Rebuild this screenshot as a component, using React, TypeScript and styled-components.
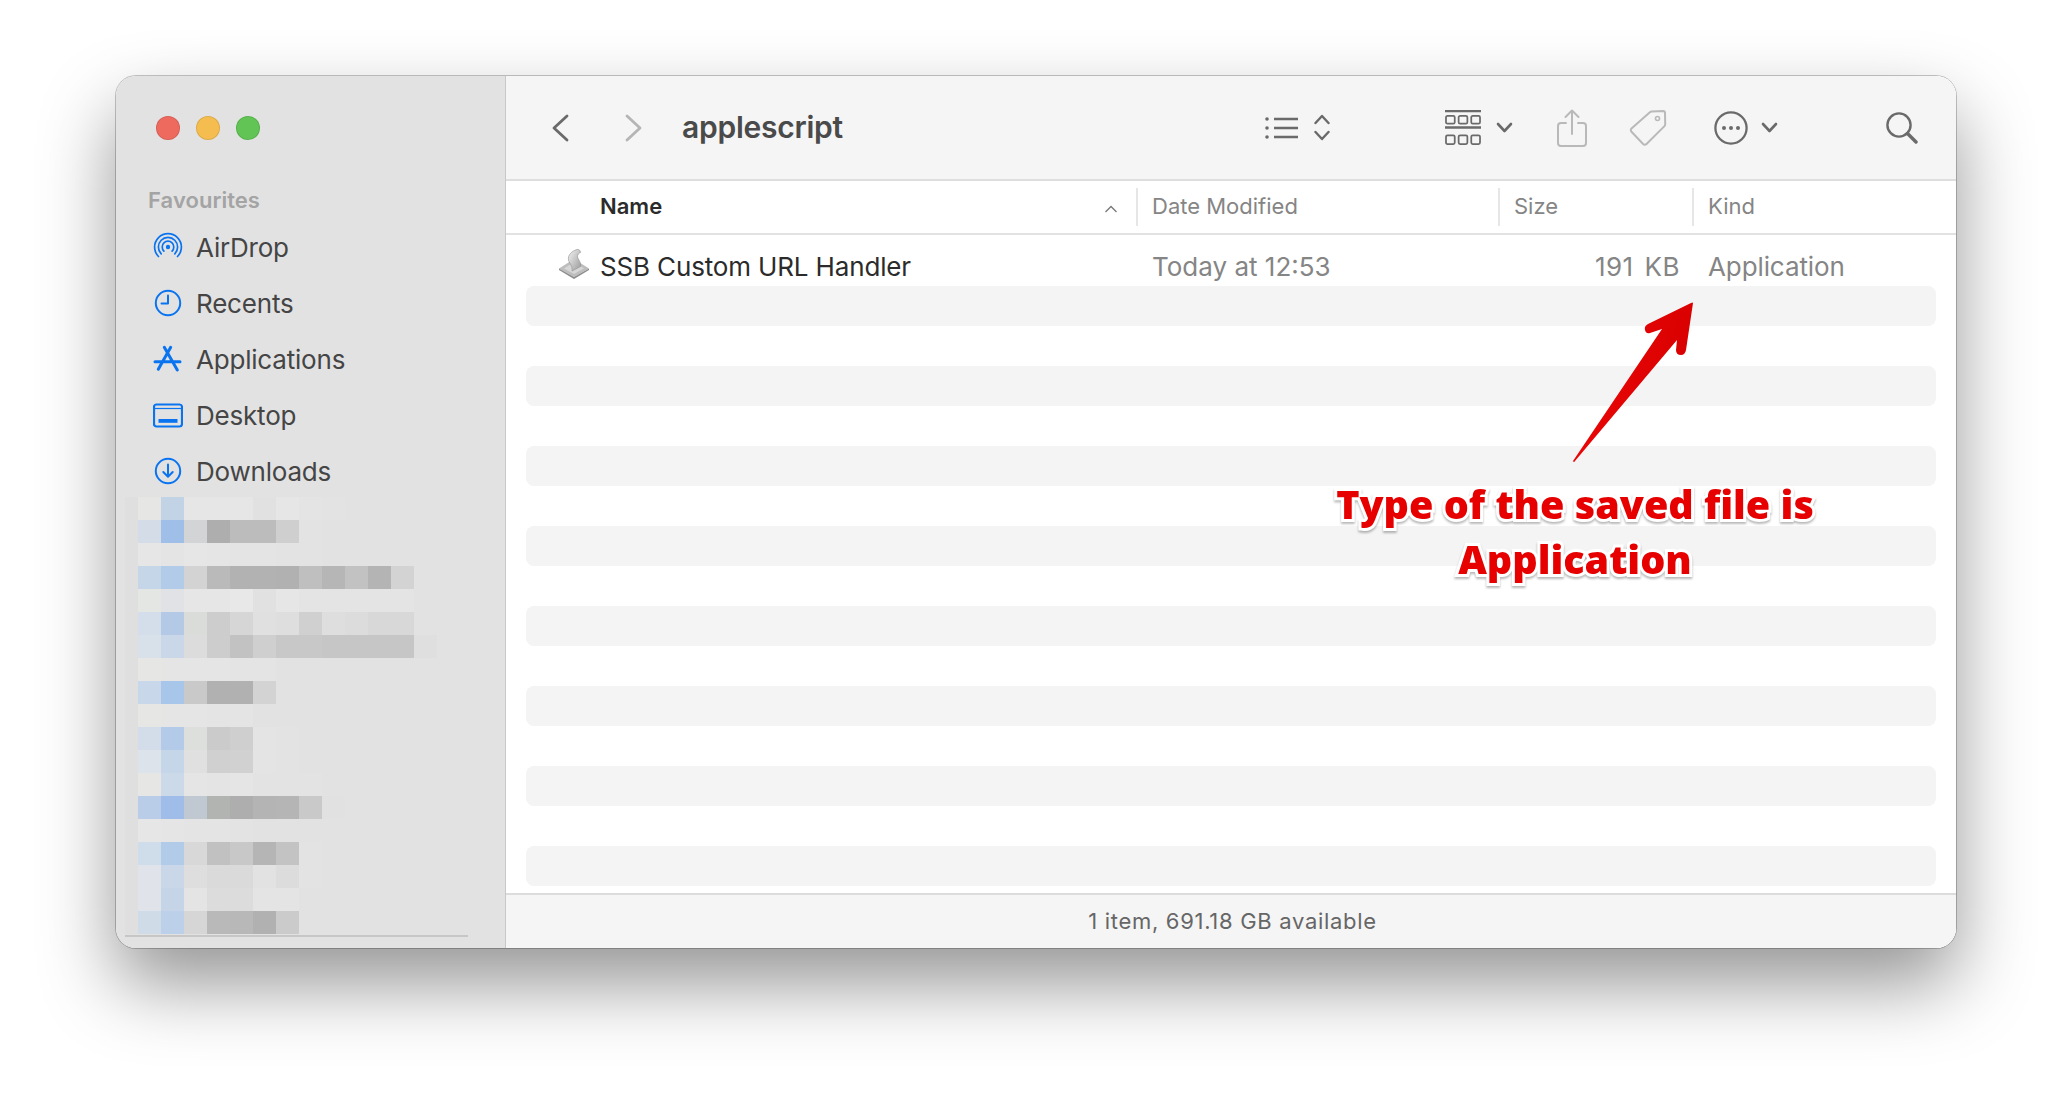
import React from 'react';
import styled, { createGlobalStyle } from 'styled-components';

const GlobalStyle = createGlobalStyle`
  body {
    margin: 0;
    background: #fff;
    font-family: Inter, "Liberation Sans", sans-serif;
  }
`;

const mosaic: string[][] = [
  ['e6e6e4', 'c3d3e6', 'e6e6e6', 'e6e6e6', 'e6e6e6', 'e1e1e1', 'e6e6e6', 'e4e4e4', 'e3e3e3'],
  ['d4dce8', '9fbfe8', 'd3d4d6', 'aeaeae', 'bcbcbc', 'bcbcbc', 'cfcfcf', 'e3e3e3'],
  ['e5e6e5', 'e4e4e4', 'e6e6e6', 'e5e5e5', 'e4e4e4', 'e4e4e4', 'e3e3e3', 'e3e3e3'],
  ['c5d6e8', 'b1cbe8', 'd3d3d3', 'bababa', 'b2b2b2', 'b2b2b2', 'b1b1b1', 'bfbfbf', 'b6b6b6', 'c2c2c2', 'b4b4b4', 'd3d3d3'],
  ['e4e6e4', 'e0e2e6', 'e6e6e6', 'e6e6e6', 'e8e8e8', 'e1e1e1', 'e6e6e6', 'e4e4e4', 'e4e4e4', 'e4e4e4', 'e4e4e4', 'e4e4e4'],
  ['d4deea', 'b4c9e6', 'dadcda', 'cdcdcd', 'd6d6d6', 'e0e0e0', 'dedede', 'd0d0d0', 'dedede', 'dcdcdc', 'd8d8d8', 'd8d8d8', 'e2e2e2'],
  ['d8e0ea', 'c9d7e8', 'dcdcdc', 'cdcdcd', 'c2c2c2', 'cfcfcf', 'c8c8c8', 'c8c8c8', 'c6c6c6', 'c6c6c6', 'c6c6c6', 'c6c6c6', 'dfdfdf'],
  ['e6e7e5', 'e5e5e5', 'e5e5e5', 'e5e5e5', 'e4e4e4', 'e4e4e4'],
  ['c8d8ea', 'a8c6ea', 'c9c9c9', 'b1b1b1', 'b1b1b1', 'd3d3d3'],
  ['e6e7e5', 'e5e5e5', 'e5e5e5', 'e4e4e4', 'e4e4e4'],
  ['d3dce9', 'b3cae8', 'dcdfdc', 'cbcbcb', 'cfcfcf', 'e4e4e4', 'e3e3e3'],
  ['dde3eb', 'c5d6e8', 'e0e0e0', 'd0d0d0', 'd1d1d1', 'e4e4e4', 'e3e3e3'],
  ['e6e6e4', 'ccd9e8', 'e5e5e5', 'e4e4e4', 'e5e5e5', 'e3e3e3', 'e3e3e3', 'e3e3e3'],
  ['b9cde8', '9fbde8', 'c0c8d2', 'b2b4b2', 'aeaeae', 'b4b4b4', 'b5b5b5', 'c9c9c9', 'e1e1e1'],
  ['e5e6e5', 'e5e5e5', 'e4e4e4', 'e4e4e4', 'e3e3e3'],
  ['cfdcea', 'b1cbe9', 'd8d8d8', 'c1c1c1', 'c8c8c8', 'b5b5b5', 'c3c3c3', 'e3e3e3'],
  ['e0e4ea', 'c9d7e8', 'dedede', 'dadada', 'dadada', 'e2e2e2', 'dcdcdc', 'e3e3e3'],
  ['e0e4ea', 'c5d4e7', 'e4e4e4', 'dcdcdc', 'dcdcdc', 'e4e4e4', 'e4e4e4'],
  ['d0dbe8', 'bdd0e9', 'd6d6d6', 'b9b9b9', 'b8b8b8', 'b1b1b1', 'cbcbcb'],
];

const App: React.FC = () => (
  <>
    <GlobalStyle />
    <Page>
      <Window>
        <Sidebar>
          <Lights>
            <Light $color="#ee6a5f" />
            <Light $color="#f5bd4f" />
            <Light $color="#61c454" />
          </Lights>
          <SectionTitle>Favourites</SectionTitle>
          <SideRow>
            <SideIcon viewBox="0 0 30 30">
              <circle cx="15" cy="15" r="2.2" fill="#0a74f0" />
              <path
                d="M5.5 24.5A13.4 13.4 0 1 1 24.5 24.5M8.2 21.8A9.6 9.6 0 1 1 21.8 21.8M10.9 19.1A5.8 5.8 0 1 1 19.1 19.1"
                fill="none"
                stroke="#0a74f0"
                strokeWidth="1.7"
                strokeLinecap="round"
              />
            </SideIcon>
            AirDrop
          </SideRow>
          <SideRow>
            <SideIcon viewBox="0 0 30 30">
              <circle cx="15" cy="15" r="12.2" fill="none" stroke="#0a74f0" strokeWidth="2" />
              <path d="M15 7.5V15.6H8.5" fill="none" stroke="#0a74f0" strokeWidth="2" strokeLinecap="round" strokeLinejoin="round" />
            </SideIcon>
            Recents
          </SideRow>
          <SideRow>
            <SideIcon viewBox="0 0 30 30">
              <path d="M17.7 3.3L5.3 25.3M11.3 3.3L24.3 26M2 17.7H27" fill="none" stroke="#0a74f0" strokeWidth="3" strokeLinecap="round" />
            </SideIcon>
            Applications
          </SideRow>
          <SideRow>
            <SideIcon viewBox="0 0 30 30">
              <rect x="1" y="4.5" width="28" height="22" rx="2.5" fill="none" stroke="#0a74f0" strokeWidth="2.2" />
              <path d="M1 8.5H29" stroke="#0a74f0" strokeWidth="1.2" />
              <rect x="5.5" y="19" width="19" height="3.8" fill="#0a74f0" />
            </SideIcon>
            Desktop
          </SideRow>
          <SideRow>
            <SideIcon viewBox="0 0 30 30">
              <circle cx="15" cy="15" r="12.2" fill="none" stroke="#0a74f0" strokeWidth="2" />
              <path d="M15 8.5V20.5M10.3 16L15 20.8L19.7 16" fill="none" stroke="#0a74f0" strokeWidth="2" strokeLinecap="round" strokeLinejoin="round" />
            </SideIcon>
            Downloads
          </SideRow>
          <Mosaic>
            {mosaic.map((row, r) => (
              <MosaicRow key={r}>
                {row.map((tone, c) => (
                  <MosaicCell key={c} $tone={tone} />
                ))}
              </MosaicRow>
            ))}
          </Mosaic>
          <SideRule />
        </Sidebar>

        <Main>
          <Toolbar>
            <NavIcon viewBox="0 0 18 28" $ml={45}>
              <path d="M16 2L3 14L16 26" stroke="#6a6a6a" />
            </NavIcon>
            <NavIcon viewBox="0 0 18 28" $ml={56}>
              <path d="M2 2L15 14L2 26" stroke="#b5b5b5" />
            </NavIcon>
            <Title>applescript</Title>
            <ToolIcon width="34" height="24" viewBox="0 0 34 24" $ml={422}>
              <path d="M9 3H33M9 12H33M9 21H33" stroke="#6a6a6a" strokeWidth="2.4" />
              <circle cx="2" cy="3" r="1.8" fill="#6a6a6a" />
              <circle cx="2" cy="12" r="1.8" fill="#6a6a6a" />
              <circle cx="2" cy="21" r="1.8" fill="#6a6a6a" />
            </ToolIcon>
            <ToolIcon width="16" height="27" viewBox="0 0 16 27" $ml={15}>
              <path d="M1.5 9L8 2L14.5 9M1.5 18L8 25L14.5 18" fill="none" stroke="#6a6a6a" strokeWidth="2.4" strokeLinecap="round" strokeLinejoin="round" />
            </ToolIcon>
            <ToolIcon width="36" height="35" viewBox="0 0 37 36" $ml={115}>
              <path d="M0 1.2H37M0 18H37" stroke="#6a6a6a" strokeWidth="2.4" />
              <rect x="1" y="6" width="9" height="8" rx="1.5" fill="none" stroke="#6a6a6a" strokeWidth="1.8" />
              <rect x="14" y="6" width="9" height="8" rx="1.5" fill="none" stroke="#6a6a6a" strokeWidth="1.8" />
              <rect x="27" y="6" width="9" height="8" rx="1.5" fill="none" stroke="#6a6a6a" strokeWidth="1.8" />
              <rect x="1" y="26" width="9" height="9" rx="1.5" fill="none" stroke="#6a6a6a" strokeWidth="1.8" />
              <rect x="14" y="26" width="9" height="9" rx="1.5" fill="none" stroke="#6a6a6a" strokeWidth="1.8" />
              <rect x="27" y="26" width="9" height="9" rx="1.5" fill="none" stroke="#6a6a6a" strokeWidth="1.8" />
            </ToolIcon>
            <ToolIcon width="17" height="11" viewBox="0 0 17 11" $ml={15}>
              <path d="M2 2L8.5 9L15 2" fill="none" stroke="#6a6a6a" strokeWidth="2.6" strokeLinecap="round" strokeLinejoin="round" />
            </ToolIcon>
            <ToolIcon width="30" height="38" viewBox="0 0 30 38" $ml={44}>
              <path d="M9 14H4a3 3 0 0 0-3 3v17a3 3 0 0 0 3 3h22a3 3 0 0 0 3-3V17a3 3 0 0 0-3-3h-5M15 25V2M8.5 8L15 1.5L21.5 8" fill="none" stroke="#b9b9b9" strokeWidth="2" strokeLinecap="round" strokeLinejoin="round" />
            </ToolIcon>
            <ToolIcon width="38" height="37" viewBox="0 0 38 37" $ml={42}>
              <path d="M23 2.5L34 2a2 2 0 0 1 2 2l.2 11a3 3 0 0 1-1 2.4L17.5 35a2.4 2.4 0 0 1-3.4 0L2.5 22.8a2.4 2.4 0 0 1 0-3.4L20.6 3.4a3.4 3.4 0 0 1 2.4-.9z" fill="none" stroke="#b9b9b9" strokeWidth="2" />
              <circle cx="28.5" cy="9.5" r="2" fill="none" stroke="#b9b9b9" strokeWidth="1.6" />
            </ToolIcon>
            <ToolIcon width="34" height="34" viewBox="0 0 34 34" $ml={47}>
              <circle cx="17" cy="17" r="15.6" fill="none" stroke="#6a6a6a" strokeWidth="2.3" />
              <circle cx="10" cy="17" r="2" fill="#6a6a6a" />
              <circle cx="17" cy="17" r="2" fill="#6a6a6a" />
              <circle cx="24" cy="17" r="2" fill="#6a6a6a" />
            </ToolIcon>
            <ToolIcon width="17" height="11" viewBox="0 0 17 11" $ml={13}>
              <path d="M2 2L8.5 9L15 2" fill="none" stroke="#6a6a6a" strokeWidth="2.6" strokeLinecap="round" strokeLinejoin="round" />
            </ToolIcon>
            <ToolIcon width="32" height="32" viewBox="0 0 32 32" $ml={108}>
              <circle cx="13" cy="13" r="11.6" fill="none" stroke="#6a6a6a" strokeWidth="2.4" />
              <path d="M21.5 21.5L30 30" stroke="#6a6a6a" strokeWidth="3.4" strokeLinecap="round" />
            </ToolIcon>
          </Toolbar>

          <HeaderRow>
            <HeadCell $first $active>
              Name
              <SortIcon width="14" height="8" viewBox="0 0 14 8">
                <path d="M1.5 7L7 1.5L12.5 7" fill="none" stroke="#777" strokeWidth="1.3" />
              </SortIcon>
            </HeadCell>
            <HeadCell>Date Modified</HeadCell>
            <HeadCell>Size</HeadCell>
            <HeadCell>Kind</HeadCell>
          </HeaderRow>

          <List>
            <FileRow>
              <NameCell>
                <AppIcon width="30" height="30" viewBox="0 0 30 30">
                  <defs>
                    <linearGradient id="scroll" x1="0" y1="0" x2="1" y2="1">
                      <stop offset="0" stopColor="#f4f4f4" />
                      <stop offset="1" stopColor="#9a9a9a" />
                    </linearGradient>
                  </defs>
                  <path d="M15 10L30 19.5L15 28L0 19.5z" fill="#bdbdbd" />
                  <path d="M0 19.5L15 28L30 19.5V21L15 30L0 21z" fill="#8c8c8c" />
                  <path d="M15 13L25 19.5L15 25L5 19.5z" fill="#d6d6d6" />
                  <path d="M18 0.5C13 2 8.5 6 9.5 11C10.5 15 14 17 13 22L21.5 17.5C22.5 13.5 19 10.5 18.5 8C18.2 5.5 20 4 21.5 3.5C21.5 1.5 20 0.2 18 0.5z" fill="url(#scroll)" stroke="#8f8f8f" strokeWidth="0.6" />
                </AppIcon>
                SSB Custom URL Handler
              </NameCell>
              <DateCell>Today at 12:53</DateCell>
              <SizeCell>191 KB</SizeCell>
              <KindCell>Application</KindCell>
            </FileRow>
            {Array.from({ length: 8 }).map((_, i) => (
              <Stripe key={i} />
            ))}
          </List>

          <StatusBar>1 item, 691.18 GB available</StatusBar>

          <Arrow width="140" height="180" viewBox="0 0 140 180">
            <defs>
              <linearGradient id="arrowFill" x1="0" y1="0" x2="1" y2="0.3">
                <stop offset="0" stopColor="#f00808" />
                <stop offset="1" stopColor="#d80000" />
              </linearGradient>
            </defs>
            <path
              d="M129 3L122 50Q121 55 117 55Q112 55 112 50L113 40L11 161Q10 163 9 161L98 29L86 33Q82 34 81 30Q80 26 84 24L127 3Q129 2 129 3z"
              fill="url(#arrowFill)"
            />
          </Arrow>
          <Callout>
            Type of the saved file is
            <br />
            Application
          </Callout>
        </Main>
      </Window>
    </Page>
  </>
);

export default App;

const Page = styled.div`
  box-sizing: border-box;
  width: 2068px;
  height: 1096px;
  padding: 76px 0 0 116px;
  overflow: hidden;
`;

const Window = styled.div`
  display: flex;
  width: 1840px;
  height: 872px;
  border-radius: 20px;
  overflow: hidden;
  box-shadow: 0 0 0 1px rgba(0, 0, 0, 0.22), 0 36px 76px rgba(0, 0, 0, 0.42);
`;

const Sidebar = styled.div`
  box-sizing: border-box;
  width: 390px;
  flex: none;
  background: #e2e2e2;
  border-right: 1px solid #c8c8c8;
  padding-left: 9px;
  display: flex;
  flex-direction: column;
`;

const Lights = styled.div`
  display: flex;
  gap: 16px;
  padding: 40px 0 0 31px;
`;

const Light = styled.span<{ $color: string }>`
  width: 24px;
  height: 24px;
  border-radius: 50%;
  background: ${(p) => p.$color};
  box-shadow: inset 0 0 0 1px rgba(0, 0, 0, 0.1);
`;

const SectionTitle = styled.div`
  margin: 47px 0 6px 23px;
  height: 26px;
  line-height: 26px;
  font-size: 22px;
  font-weight: 600;
  letter-spacing: 0.05px;
  color: #a4a4a4;
`;

const SideRow = styled.div`
  display: flex;
  align-items: center;
  height: 56px;
  padding-left: 28px;
  font-size: 26px;
  letter-spacing: -0.2px;
  color: #454545;
`;

const SideIcon = styled.svg`
  width: 30px;
  height: 30px;
  margin-right: 13px;
  flex: none;
`;

const Mosaic = styled.div`
  margin-top: -2px;
  padding-left: 13px;
  display: flex;
  flex-direction: column;
  box-shadow: inset 13px 0 0 #dfdfdf;
`;

const MosaicRow = styled.div`
  display: flex;
  height: 23px;
`;

const MosaicCell = styled.span<{ $tone: string }>`
  width: 23px;
  height: 23px;
  background: #${(p) => p.$tone};
`;

const SideRule = styled.div`
  width: 343px;
  height: 2px;
  margin-top: 1px;
  background: #c6c6c6;
`;

const Main = styled.div`
  position: relative;
  flex: 1;
  min-width: 0;
  display: flex;
  flex-direction: column;
  background: #fff;
`;

const Toolbar = styled.div`
  box-sizing: border-box;
  height: 105px;
  display: flex;
  align-items: center;
  background: #f5f5f5;
  border-bottom: 2px solid #dedede;
`;

const NavIcon = styled.svg<{ $ml: number }>`
  width: 18px;
  height: 28px;
  margin-left: ${(p) => p.$ml}px;
  flex: none;
  fill: none;
  stroke-width: 2.8;
  stroke-linecap: round;
  stroke-linejoin: round;
`;

const Title = styled.div`
  margin-left: 39px;
  width: 161px;
  margin-top: -2px;
  font-size: 30px;
  font-weight: 600;
  letter-spacing: -0.25px;
  color: #4a4a4a;
`;

const ToolIcon = styled.svg<{ $ml: number }>`
  margin-left: ${(p) => p.$ml}px;
  flex: none;
`;

const HeaderRow = styled.div`
  box-sizing: border-box;
  height: 54px;
  display: grid;
  grid-template-columns: 630px 362px 194px 1fr;
  align-items: center;
  border-bottom: 2px solid #e2e2e2;
`;

const HeadCell = styled.div<{ $first?: boolean; $active?: boolean }>`
  box-sizing: border-box;
  position: relative;
  height: 38px;
  line-height: 36px;
  padding-left: ${(p) => (p.$first ? 94 : 14)}px;
  border-left: ${(p) => (p.$first ? 'none' : '2px solid #e6e6e6')};
  font-size: 22px;
  font-weight: ${(p) => (p.$active ? 600 : 400)};
  color: ${(p) => (p.$active ? '#2b2b2b' : '#858585')};
`;

const SortIcon = styled.svg`
  position: absolute;
  right: 18px;
  top: 17px;
`;

const List = styled.div`
  flex: 1;
  display: flex;
  flex-direction: column;
  align-items: stretch;
`;

const FileRow = styled.div`
  box-sizing: border-box;
  height: 51px;
  padding-top: 12px;
  display: grid;
  grid-template-columns: 630px 362px 194px 1fr;
  align-items: center;
  font-size: 26px;
  color: #858585;
`;

const NameCell = styled.div`
  display: flex;
  align-items: center;
  padding-left: 53px;
  letter-spacing: -0.15px;
  color: #2b2b2b;
`;

const AppIcon = styled.svg`
  margin: -6px 11px 0 0;
  flex: none;
`;

const DateCell = styled.div`
  padding-left: 16px;
`;

const SizeCell = styled.div`
  padding-right: 12px;
  text-align: right;
  letter-spacing: 0.5px;
  word-spacing: 3px;
`;

const KindCell = styled.div`
  padding-left: 16px;
  letter-spacing: -0.1px;
`;

const Stripe = styled.div`
  height: 40px;
  margin: 0 20px 40px;
  border-radius: 8px;
  background: #f4f4f4;
  &:last-child {
    margin-bottom: 0;
  }
`;

const StatusBar = styled.div`
  box-sizing: border-box;
  height: 55px;
  line-height: 52px;
  padding-left: 3px;
  text-align: center;
  font-size: 22px;
  letter-spacing: 0.7px;
  color: #666;
  background: #f5f5f5;
  border-top: 2px solid #dcdcdc;
`;

const Arrow = styled.svg`
  position: absolute;
  left: 1058px;
  top: 224px;
`;

const Callout = styled.div`
  position: absolute;
  left: 799px;
  top: 401px;
  width: 540px;
  text-align: center;
  font-family: "Open Sans", "Noto Sans", sans-serif;
  font-size: 39.5px;
  font-weight: 800;
  line-height: 55px;
  color: #e60000;
  -webkit-text-stroke: 6px #fff;
  paint-order: stroke fill;
  filter: drop-shadow(0 2px 1px rgba(0, 0, 0, 0.28));
`;
